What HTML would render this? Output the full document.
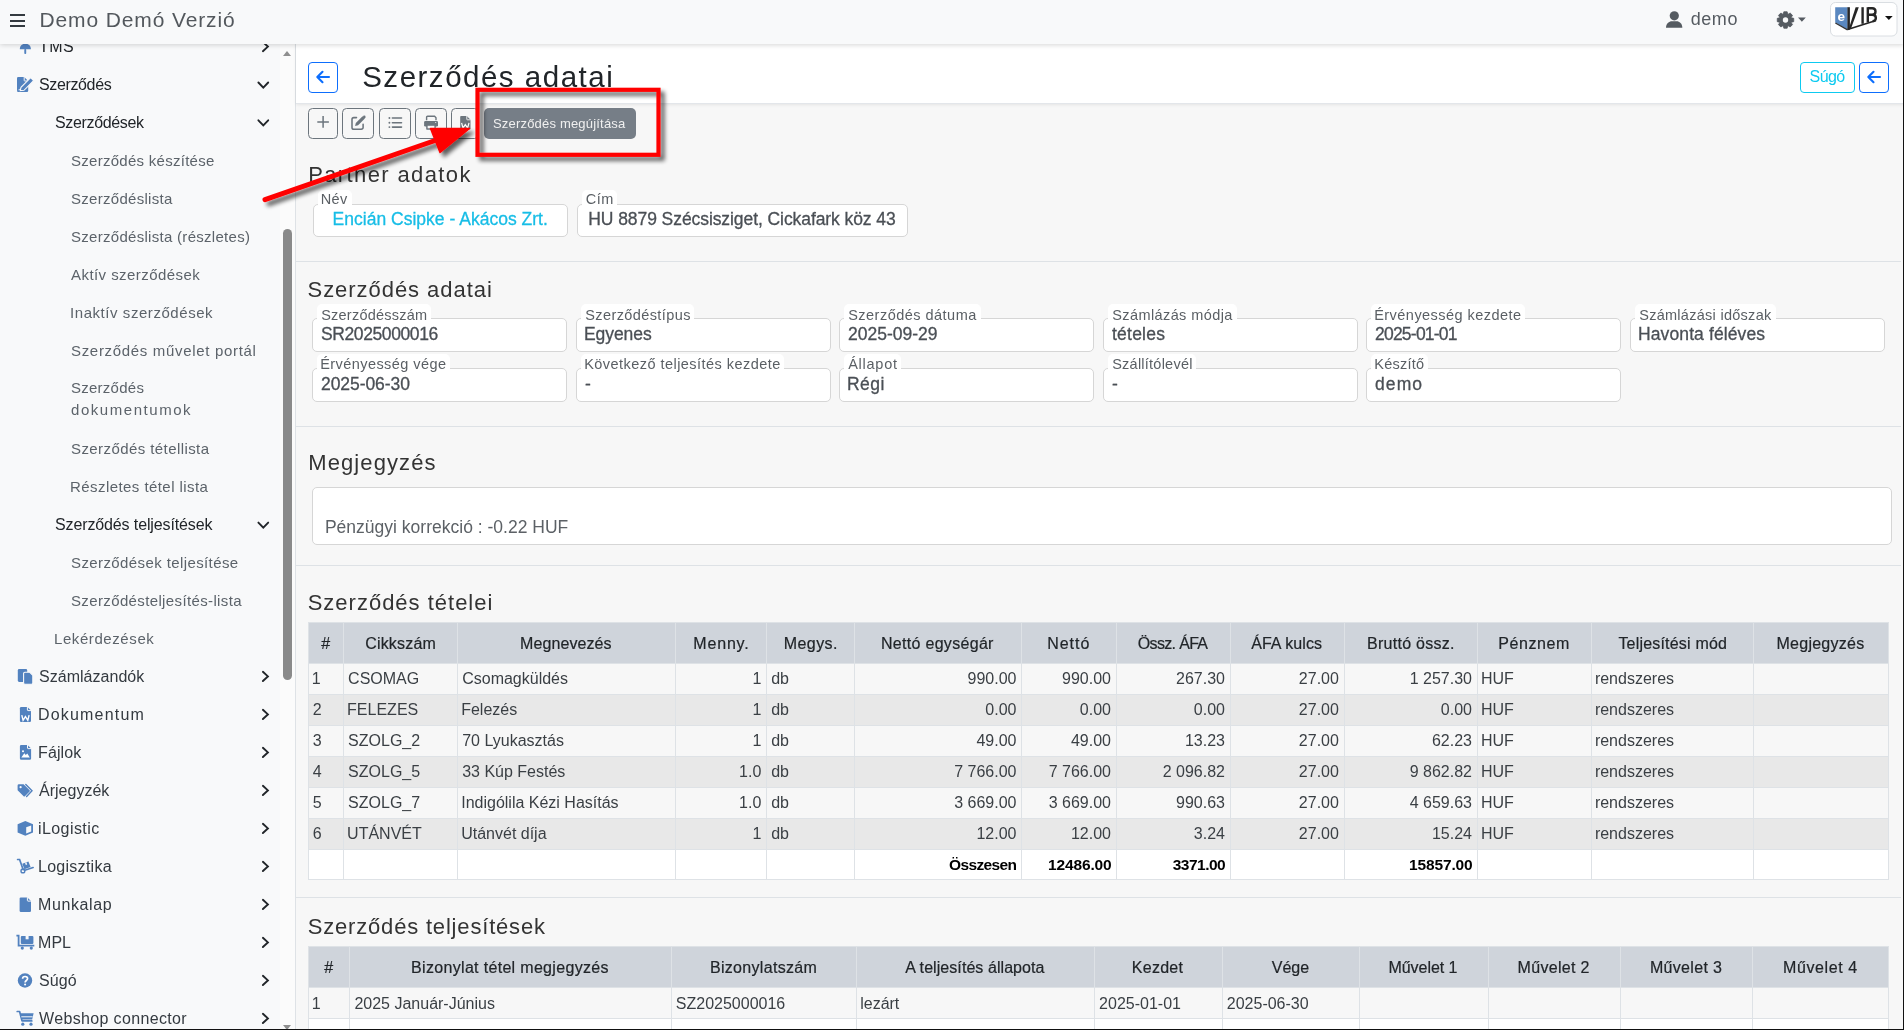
<!DOCTYPE html>
<html><head><meta charset="utf-8"><title>Szerződés adatai</title>
<style>
html,body{margin:0;padding:0;}
body{width:1904px;height:1030px;overflow:hidden;position:relative;background:#f7f7f7;font-family:"Liberation Sans", sans-serif;line-height:1;}
span{white-space:nowrap;line-height:1;}
svg{display:block}
</style></head><body>
<div style="position:absolute;left:0;top:0;width:1904px;height:44px;background:#f8f9fa;box-shadow:0 1px 5px rgba(0,0,0,.17);z-index:5"></div>
<div style="position:absolute;left:10px;top:14px;width:15px;height:2.2px;background:#343a40;z-index:6"></div>
<div style="position:absolute;left:10px;top:19.5px;width:15px;height:2.2px;background:#343a40;z-index:6"></div>
<div style="position:absolute;left:10px;top:25px;width:15px;height:2.2px;background:#343a40;z-index:6"></div>
<div style="position:absolute;left:0;top:44px;width:295px;height:986px;background:#f8f9fa;border-right:1px solid #dee2e6;z-index:1"></div>
<div style="position:absolute;left:280px;top:44px;width:15px;height:986px;background:#fbfbfb;z-index:1"></div>
<div style="position:absolute;left:283px;top:229px;width:9px;height:451px;background:#8a8a8a;border-radius:4.5px;z-index:2"></div>
<div style="position:absolute;left:296px;top:44px;width:1608px;height:58.5px;background:#fff;border-bottom:1px solid #e3e6ea;box-shadow:0 1px 3px rgba(0,0,0,.08);z-index:1"></div>
<div style="position:absolute;left:296px;top:261px;width:1605px;height:1px;background:#dee2e6"></div>
<div style="position:absolute;left:296px;top:426px;width:1605px;height:1px;background:#dee2e6"></div>
<div style="position:absolute;left:296px;top:565px;width:1605px;height:1px;background:#dee2e6"></div>
<div style="position:absolute;left:296px;top:897px;width:1605px;height:1px;background:#dee2e6"></div>
<div style="position:absolute;left:312.5px;top:203.5px;width:253px;height:31px;background:#fff;border:1px solid #d6d6d6;border-radius:5px"></div>
<div style="position:absolute;left:317.5px;top:189.5px;width:34.4px;height:16px;background:#fff;border-radius:5px 5px 0 0"></div>
<div style="position:absolute;left:576.5px;top:203.5px;width:329.5px;height:31px;background:#fff;border:1px solid #d6d6d6;border-radius:5px"></div>
<div style="position:absolute;left:581.5px;top:189.5px;width:35.6px;height:16px;background:#fff;border-radius:5px 5px 0 0"></div>
<div style="position:absolute;left:312px;top:318px;width:253px;height:31.5px;background:#fff;border:1px solid #d6d6d6;border-radius:5px"></div>
<div style="position:absolute;left:317px;top:304px;width:113.8px;height:16px;background:#fff;border-radius:5px 5px 0 0"></div>
<div style="position:absolute;left:576px;top:318px;width:253px;height:31.5px;background:#fff;border:1px solid #d6d6d6;border-radius:5px"></div>
<div style="position:absolute;left:581px;top:304px;width:113px;height:16px;background:#fff;border-radius:5px 5px 0 0"></div>
<div style="position:absolute;left:839px;top:318px;width:253px;height:31.5px;background:#fff;border:1px solid #d6d6d6;border-radius:5px"></div>
<div style="position:absolute;left:844px;top:304px;width:137px;height:16px;background:#fff;border-radius:5px 5px 0 0"></div>
<div style="position:absolute;left:1103px;top:318px;width:253px;height:31.5px;background:#fff;border:1px solid #d6d6d6;border-radius:5px"></div>
<div style="position:absolute;left:1108px;top:304px;width:129.1px;height:16px;background:#fff;border-radius:5px 5px 0 0"></div>
<div style="position:absolute;left:1366px;top:318px;width:253px;height:31.5px;background:#fff;border:1px solid #d6d6d6;border-radius:5px"></div>
<div style="position:absolute;left:1371px;top:304px;width:153.9px;height:16px;background:#fff;border-radius:5px 5px 0 0"></div>
<div style="position:absolute;left:1630px;top:318px;width:253px;height:31.5px;background:#fff;border:1px solid #d6d6d6;border-radius:5px"></div>
<div style="position:absolute;left:1635px;top:304px;width:140.8px;height:16px;background:#fff;border-radius:5px 5px 0 0"></div>
<div style="position:absolute;left:312px;top:368px;width:253px;height:31.5px;background:#fff;border:1px solid #d6d6d6;border-radius:5px"></div>
<div style="position:absolute;left:317px;top:354px;width:132.7px;height:16px;background:#fff;border-radius:5px 5px 0 0"></div>
<div style="position:absolute;left:576px;top:368px;width:253px;height:31.5px;background:#fff;border:1px solid #d6d6d6;border-radius:5px"></div>
<div style="position:absolute;left:581px;top:354px;width:203px;height:16px;background:#fff;border-radius:5px 5px 0 0"></div>
<div style="position:absolute;left:839px;top:368px;width:253px;height:31.5px;background:#fff;border:1px solid #d6d6d6;border-radius:5px"></div>
<div style="position:absolute;left:844px;top:354px;width:56.8px;height:16px;background:#fff;border-radius:5px 5px 0 0"></div>
<div style="position:absolute;left:1103px;top:368px;width:253px;height:31.5px;background:#fff;border:1px solid #d6d6d6;border-radius:5px"></div>
<div style="position:absolute;left:1108px;top:354px;width:88px;height:16px;background:#fff;border-radius:5px 5px 0 0"></div>
<div style="position:absolute;left:1366px;top:368px;width:253px;height:31.5px;background:#fff;border:1px solid #d6d6d6;border-radius:5px"></div>
<div style="position:absolute;left:1371px;top:354px;width:56.9px;height:16px;background:#fff;border-radius:5px 5px 0 0"></div>
<div style="position:absolute;left:312px;top:487px;width:1578px;height:55.5px;background:#fff;border:1px solid #d6d6d6;border-radius:5px"></div>
<div style="position:absolute;left:308px;top:622.2px;width:1580.4px;height:41.6px;background:#cfd4db"></div>
<div style="position:absolute;left:308px;top:663.8000000000001px;width:1580.4px;height:30.87px;background:#f7f7f7"></div>
<div style="position:absolute;left:308px;top:694.6700000000001px;width:1580.4px;height:30.87px;background:#e8e8e8"></div>
<div style="position:absolute;left:308px;top:725.5400000000001px;width:1580.4px;height:30.87px;background:#f7f7f7"></div>
<div style="position:absolute;left:308px;top:756.4100000000001px;width:1580.4px;height:30.87px;background:#e8e8e8"></div>
<div style="position:absolute;left:308px;top:787.2800000000001px;width:1580.4px;height:30.87px;background:#f7f7f7"></div>
<div style="position:absolute;left:308px;top:818.1500000000001px;width:1580.4px;height:30.87px;background:#e8e8e8"></div>
<div style="position:absolute;left:308px;top:849.0200000000001px;width:1580.4px;height:30.87px;background:#ffffff"></div>
<div style="position:absolute;left:308px;top:621.7px;width:1580.4px;height:1px;background:#dee2e6"></div>
<div style="position:absolute;left:308px;top:663.3000000000001px;width:1580.4px;height:1px;background:#dee2e6"></div>
<div style="position:absolute;left:308px;top:694.1700000000001px;width:1580.4px;height:1px;background:#dee2e6"></div>
<div style="position:absolute;left:308px;top:725.0400000000001px;width:1580.4px;height:1px;background:#dee2e6"></div>
<div style="position:absolute;left:308px;top:755.9100000000001px;width:1580.4px;height:1px;background:#dee2e6"></div>
<div style="position:absolute;left:308px;top:786.7800000000001px;width:1580.4px;height:1px;background:#dee2e6"></div>
<div style="position:absolute;left:308px;top:817.6500000000001px;width:1580.4px;height:1px;background:#dee2e6"></div>
<div style="position:absolute;left:308px;top:848.5200000000001px;width:1580.4px;height:1px;background:#dee2e6"></div>
<div style="position:absolute;left:308px;top:879.3900000000001px;width:1580.4px;height:1px;background:#dee2e6"></div>
<div style="position:absolute;left:307.5px;top:622.2px;width:1px;height:257.69000000000005px;background:#dee2e6"></div>
<div style="position:absolute;left:342.8px;top:622.2px;width:1px;height:257.69000000000005px;background:#dee2e6"></div>
<div style="position:absolute;left:456.9px;top:622.2px;width:1px;height:257.69000000000005px;background:#dee2e6"></div>
<div style="position:absolute;left:674.7px;top:622.2px;width:1px;height:257.69000000000005px;background:#dee2e6"></div>
<div style="position:absolute;left:765.9px;top:622.2px;width:1px;height:257.69000000000005px;background:#dee2e6"></div>
<div style="position:absolute;left:853.9px;top:622.2px;width:1px;height:257.69000000000005px;background:#dee2e6"></div>
<div style="position:absolute;left:1021.1px;top:622.2px;width:1px;height:257.69000000000005px;background:#dee2e6"></div>
<div style="position:absolute;left:1115.6px;top:622.2px;width:1px;height:257.69000000000005px;background:#dee2e6"></div>
<div style="position:absolute;left:1229.6px;top:622.2px;width:1px;height:257.69000000000005px;background:#dee2e6"></div>
<div style="position:absolute;left:1343.5px;top:622.2px;width:1px;height:257.69000000000005px;background:#dee2e6"></div>
<div style="position:absolute;left:1476.6px;top:622.2px;width:1px;height:257.69000000000005px;background:#dee2e6"></div>
<div style="position:absolute;left:1590.6px;top:622.2px;width:1px;height:257.69000000000005px;background:#dee2e6"></div>
<div style="position:absolute;left:1752.8px;top:622.2px;width:1px;height:257.69000000000005px;background:#dee2e6"></div>
<div style="position:absolute;left:1887.9px;top:622.2px;width:1px;height:257.69000000000005px;background:#dee2e6"></div>
<div style="position:absolute;left:308px;top:946.2px;width:1580.4px;height:41.2px;background:#cfd4db"></div>
<div style="position:absolute;left:308px;top:987.4000000000001px;width:1580.4px;height:30.9px;background:#f7f7f7"></div>
<div style="position:absolute;left:308px;top:1018.3000000000001px;width:1580.4px;height:30.9px;background:#ffffff"></div>
<div style="position:absolute;left:308px;top:945.7px;width:1580.4px;height:1px;background:#dee2e6"></div>
<div style="position:absolute;left:308px;top:986.9000000000001px;width:1580.4px;height:1px;background:#dee2e6"></div>
<div style="position:absolute;left:308px;top:1017.8000000000001px;width:1580.4px;height:1px;background:#dee2e6"></div>
<div style="position:absolute;left:307.5px;top:946.2px;width:1px;height:83.79999999999995px;background:#dee2e6"></div>
<div style="position:absolute;left:349.1px;top:946.2px;width:1px;height:83.79999999999995px;background:#dee2e6"></div>
<div style="position:absolute;left:670.5px;top:946.2px;width:1px;height:83.79999999999995px;background:#dee2e6"></div>
<div style="position:absolute;left:855.9px;top:946.2px;width:1px;height:83.79999999999995px;background:#dee2e6"></div>
<div style="position:absolute;left:1093.8px;top:946.2px;width:1px;height:83.79999999999995px;background:#dee2e6"></div>
<div style="position:absolute;left:1221.5px;top:946.2px;width:1px;height:83.79999999999995px;background:#dee2e6"></div>
<div style="position:absolute;left:1358.5px;top:946.2px;width:1px;height:83.79999999999995px;background:#dee2e6"></div>
<div style="position:absolute;left:1487.5px;top:946.2px;width:1px;height:83.79999999999995px;background:#dee2e6"></div>
<div style="position:absolute;left:1619.5px;top:946.2px;width:1px;height:83.79999999999995px;background:#dee2e6"></div>
<div style="position:absolute;left:1752.4px;top:946.2px;width:1px;height:83.79999999999995px;background:#dee2e6"></div>
<div style="position:absolute;left:1887.9px;top:946.2px;width:1px;height:83.79999999999995px;background:#dee2e6"></div>
<div style="position:absolute;left:308px;top:62px;width:28px;height:29px;border:1px solid #0d6efd;border-radius:4px;background:transparent;z-index:2"><svg width="28" height="28" viewBox="0 0 28 28" style="position:absolute;left:0;top:0"><path d="M8.5 14 H20 M13.5 8.8 L8.3 14 L13.5 19.2" stroke="#0d6efd" stroke-width="2.1" fill="none" stroke-linecap="round" stroke-linejoin="round"/></svg></div>
<div style="position:absolute;left:1859px;top:62px;width:28px;height:29px;border:1px solid #0d6efd;border-radius:4px;background:transparent;z-index:2"><svg width="28" height="28" viewBox="0 0 28 28" style="position:absolute;left:0;top:0"><path d="M8.5 14 H20 M13.5 8.8 L8.3 14 L13.5 19.2" stroke="#0d6efd" stroke-width="2.1" fill="none" stroke-linecap="round" stroke-linejoin="round"/></svg></div>
<div style="position:absolute;left:1800px;top:62px;width:53px;height:29px;border:1px solid #0dcaf0;border-radius:4px;background:transparent;z-index:2"></div>
<div style="position:absolute;left:308px;top:108px;width:28px;height:29px;border:1px solid #6c757d;border-radius:4.5px;background:transparent;z-index:2"></div>
<div style="position:absolute;left:342px;top:108px;width:30px;height:29px;border:1px solid #6c757d;border-radius:4.5px;background:transparent;z-index:2"></div>
<div style="position:absolute;left:379px;top:108px;width:30px;height:29px;border:1px solid #6c757d;border-radius:4.5px;background:transparent;z-index:2"></div>
<div style="position:absolute;left:415px;top:108px;width:30px;height:29px;border:1px solid #6c757d;border-radius:4.5px;background:transparent;z-index:2"></div>
<div style="position:absolute;left:451px;top:108px;width:26px;height:29px;border:1px solid #6c757d;border-radius:4.5px;background:transparent;z-index:2"></div>
<svg width="1904" height="160" viewBox="0 0 1904 160" style="position:absolute;left:0;top:0;z-index:2"><path d="M323.1 116.1 V127.8 M317.3 121.9 H328.9" stroke="#6c757d" stroke-width="1.5" fill="none"/><path d="M356.5 117.6 H353.8 a1.8 1.8 0 0 0 -1.8 1.8 V127.4 a1.8 1.8 0 0 0 1.8 1.8 H361.3 a1.8 1.8 0 0 0 1.8 -1.8 V124.2" stroke="#6c757d" stroke-width="1.55" fill="none" stroke-linecap="round"/><path d="M355.1 125.9 L355.8 123 L362.6 116.2 L364.9 118.5 L358.1 125.3Z" fill="#6c757d"/><circle cx="364.3" cy="116.9" r="1.3" fill="#6c757d"/><circle cx="389.4" cy="118" r="0.95" fill="#6c757d"/><circle cx="389.4" cy="122.7" r="0.95" fill="#6c757d"/><circle cx="389.4" cy="127.1" r="0.95" fill="#6c757d"/><path d="M392.4 118 H401.5 M392.4 122.7 H401.5 M392.4 127.1 H401.5" stroke="#6c757d" stroke-width="1.6" stroke-linecap="round"/><path d="M426.6 120.3 V117.2 a0.9 0.9 0 0 1 .9 -.9 H434.6 L436 117.7 V120.3" stroke="#6c757d" stroke-width="1.4" fill="none"/><rect x="424.1" y="120.9" width="13.9" height="5.6" rx="1.3" fill="#6c757d"/><rect x="426.2" y="124.4" width="9.6" height="5.3" rx=".6" fill="#6c757d"/><rect x="427.6" y="125.8" width="6.8" height="2.5" fill="#f7f7f7"/><circle cx="435.7" cy="122.5" r=".6" fill="#f7f7f7"/><path d="M461 116.1 H466.8 L470.5 119.8 V128.7 a0.8 0.8 0 0 1 -.8 .8 H461 a0.8 0.8 0 0 1 -.8 -.8 V116.9 a0.8 0.8 0 0 1 .8 -.8Z" fill="#6c757d"/><path d="M466.8 115.8 V119.3 a.5 .5 0 0 0 .5 .5 H470.8" stroke="#f7f7f7" stroke-width=".9" fill="none"/><path d="M461.6 122.8 L463 128 L465.3 124.6 L467.6 128 L469 122.8" stroke="#fff" stroke-width="1.2" fill="none"/></svg>
<div style="position:absolute;left:484px;top:108px;width:152px;height:30.7px;background:#767e87;border-radius:5px;z-index:3"></div>
<div style="position:absolute;left:1662px;top:8px;width:24px;height:24px;z-index:6"><svg width="24" height="24" viewBox="0 0 24 24"><circle cx="12.3" cy="7.8" r="4.6" fill="#555b61"/><path d="M4 19.5 C4 15.5 7 13.2 10 13.2 H14.5 C17.5 13.2 20.3 15.5 20.3 19.5 V19.8 H4Z" fill="#555b61"/></svg></div>
<svg width="1904" height="44" viewBox="0 0 1904 44" style="position:absolute;left:0;top:0;z-index:6"><polygon points="1791.40,17.78 1793.73,18.33 1793.73,21.67 1791.40,22.22 1791.24,22.60 1792.50,24.64 1790.14,27.00 1788.10,25.74 1787.72,25.90 1787.17,28.23 1783.83,28.23 1783.28,25.90 1782.90,25.74 1780.86,27.00 1778.50,24.64 1779.76,22.60 1779.60,22.22 1777.27,21.67 1777.27,18.33 1779.60,17.78 1779.76,17.40 1778.50,15.36 1780.86,13.00 1782.90,14.26 1783.28,14.10 1783.83,11.77 1787.17,11.77 1787.72,14.10 1788.10,14.26 1790.14,13.00 1792.50,15.36 1791.24,17.40" fill="#555b61" stroke="#555b61" stroke-width="0.8" stroke-linejoin="round"/><circle cx="1785.5" cy="20" r="2.7" fill="#f8f9fa"/><path d="M1798 17.6 H1805.8 L1801.9 21.8Z" fill="#555b61"/><rect x="1830.5" y="2.5" width="66.5" height="33.5" rx="5" fill="#fff" stroke="#dadee2" stroke-width="1"/><path d="M1835.2 7.2 H1847.6 V29.5 L1835.2 22.5Z" fill="#5a88c0"/><path d="M1835.4 23 L1847.6 29.9" stroke="#333" stroke-width="1.3"/><text x="1841.3" y="20.6" font-family="Liberation Sans" font-size="13.5" font-weight="700" fill="#fff" text-anchor="middle">e</text><rect x="1847.4" y="7.2" width="2.5" height="22.5" fill="#262626"/><path d="M1855.6 7.2 H1858.8 L1851 28.6 H1848.9Z" fill="#262626"/><rect x="1861.4" y="7.2" width="2.4" height="16.6" fill="#262626"/><rect x="1866.6" y="7.2" width="2.4" height="15.2" fill="#262626"/><path d="M1868 8.2 H1872.2 C1876.6 8.2 1876.6 14.8 1872.2 14.8 H1868 M1872.2 14.8 C1877 14.8 1877 20.8 1872.6 21.2" stroke="#262626" stroke-width="2.4" fill="none"/><path d="M1847.6 29.6 L1876 20.4" stroke="#262626" stroke-width="1.6"/><path d="M1885 15.9 H1892.7 L1888.85 19.9Z" fill="#111"/></svg>
<svg width="300" height="1030" viewBox="0 0 300 1030" style="position:absolute;left:0;top:0;z-index:2"><path d="M19.8 49.2 C19.8 42 30.9 42 30.9 49.2 Z" fill="#5282bf"/><rect x="24.3" y="49" width="1.9" height="5" rx=".8" fill="#5282bf"/><path d="M18.3 77 H24.2 L28.2 81 V90.7 a1.3 1.3 0 0 1 -1.3 1.3 H18.3 a1.3 1.3 0 0 1 -1.3 -1.3 V78.3 a1.3 1.3 0 0 1 1.3 -1.3Z" fill="#5282bf"/><path d="M24.2 76.7 V80.4 a0.6 0.6 0 0 0 .6 .6 H28.5" stroke="#f8f9fa" stroke-width="1" fill="none"/><path d="M20.2 90.6 L21 87.3 L30.6 77.7 L33.6 80.7 L24 90.3Z" fill="#5282bf" stroke="#f8f9fa" stroke-width="1.1"/><path d="M18.3 90.3 Q19.3 88.6 20 89.6" stroke="#f8f9fa" stroke-width=".8" fill="none"/><rect x="17.8" y="669" width="9.4" height="13" rx="1.4" fill="#5282bf"/><path d="M24.900000000000002 672.3 H29.799999999999997 L32.8 675.3 V683.0 a1.3 1.3 0 0 1 -1.3 1.3 H24.900000000000002 a1.3 1.3 0 0 1 -1.3 -1.3 V673.5999999999999 a1.3 1.3 0 0 1 1.3 -1.3Z" fill="#5282bf" stroke="#f8f9fa" stroke-width="1.1"/><path d="M21.2 707 H27.4 L31.0 710.6 V720.7 a1.3 1.3 0 0 1 -1.3 1.3 H21.2 a1.3 1.3 0 0 1 -1.3 -1.3 V708.3 a1.3 1.3 0 0 1 1.3 -1.3Z" fill="#5282bf"/><path d="M27.4 706.7 V710.0 a0.6 0.6 0 0 0 .6 .6 H31.3" stroke="#f8f9fa" stroke-width="1" fill="none"/><path d="M21.8 715.2 L23.1 720.3 L25.45 716.6 L27.8 720.3 L29.1 715.2" stroke="#fff" stroke-width="1.35" fill="none"/><path d="M21.2 745 H27.499999999999996 L31.099999999999998 748.6 V758.5 a1.3 1.3 0 0 1 -1.3 1.3 H21.2 a1.3 1.3 0 0 1 -1.3 -1.3 V746.3 a1.3 1.3 0 0 1 1.3 -1.3Z" fill="#5282bf"/><path d="M27.499999999999996 744.7 V748.0 a0.6 0.6 0 0 0 .6 .6 H31.4" stroke="#f8f9fa" stroke-width="1" fill="none"/><path d="M21.3 757.6 L24.3 753.3 L25.8 755 L27.3 753.6 L29.8 757.6Z" fill="#fff"/><circle cx="23" cy="751.2" r="1" fill="#fff"/><path d="M17.6 785.5 a1.3 1.3 0 0 1 1.3 -1.3 H23.6 L29.6 790.2 a.9 .9 0 0 1 0 1.3 L24.9 796.2 a.9 .9 0 0 1 -1.3 0 L17.6 790.2Z" fill="#5282bf"/><circle cx="20.6" cy="787.2" r="1.1" fill="#f8f9fa"/><path d="M25.8 784.4000000000001 L32 790.8000000000001 L26.6 796.4000000000001" stroke="#5282bf" stroke-width="1.4" fill="none" stroke-linecap="round"/><path d="M25.3 821 L33 824.2 V832.5 L25.3 835.7 L17.6 832.5 V824.2Z" fill="#5282bf"/><path d="M26.2 827.2 L31.2 825.4 V831.6 L26.2 833.6Z" fill="#f8f9fa"/><path d="M17.6 859.5 H19.6 L23.2 869.7" stroke="#5282bf" stroke-width="1.7" fill="none" stroke-linecap="round"/><circle cx="22.9" cy="870.9000000000001" r="1.9" fill="none" stroke="#5282bf" stroke-width="1.4"/><path d="M24.8 870.3000000000001 L33.1 867.5" stroke="#5282bf" stroke-width="1.7" stroke-linecap="round"/><path d="M22.3 863.7 L28.4 861.5 L30.6 867.0 L24.4 869.2Z" fill="#5282bf"/><path d="M25 862.7 L25.8 864.9000000000001 L27.2 864.4000000000001 L26.4 862.2" fill="#f8f9fa"/><path d="M20.900000000000002 897.5 H27.4 L31.0 901.1 V910.7 a1.3 1.3 0 0 1 -1.3 1.3 H20.900000000000002 a1.3 1.3 0 0 1 -1.3 -1.3 V898.8 a1.3 1.3 0 0 1 1.3 -1.3Z" fill="#5282bf"/><path d="M27.4 897.2 V900.5 a0.6 0.6 0 0 0 .6 .6 H31.3" stroke="#f8f9fa" stroke-width="1" fill="none"/><path d="M16.4 935.6999999999999 H18.6 V945.6999999999999 H34.3" stroke="#5282bf" stroke-width="1.8" fill="none"/><rect x="20.8" y="936.0" width="12.6" height="8" rx="1" fill="#5282bf"/><rect x="25.6" y="936.0" width="3" height="3.3" fill="#f8f9fa"/><circle cx="22.3" cy="948.0999999999999" r="1.6" fill="#5282bf"/><circle cx="31.3" cy="948.0999999999999" r="1.6" fill="#5282bf"/><circle cx="25" cy="980.5" r="7.2" fill="#5282bf"/><path d="M22.6 978.8000000000001 C22.6 975.8000000000001 27.6 975.8000000000001 27.6 978.6 C27.6 980.5 25.1 980.5 25.1 982.4000000000001" stroke="#fff" stroke-width="1.7" fill="none"/><circle cx="25.1" cy="984.5" r="1.05" fill="#fff"/><path d="M17.2 1011.5 H19.6 L22 1020.9 H31.8" stroke="#5282bf" stroke-width="1.7" fill="none" stroke-linecap="round" stroke-linejoin="round"/><path d="M19.9 1013.2 H33.6 L32.2 1019.4 H21.4Z" fill="#5282bf"/><path d="M21.3 1016.8000000000001 H32.6" stroke="#f8f9fa" stroke-width="1"/><circle cx="22.8" cy="1024.2" r="1.6" fill="#5282bf"/><circle cx="31" cy="1024.2" r="1.6" fill="#5282bf"/><path d="M258.4 82.5 L263.3 87.6 L268.2 82.5" stroke="#212529" stroke-width="1.9" fill="none" stroke-linecap="round"/><path d="M258.4 120.3 L263.3 125.39999999999999 L268.2 120.3" stroke="#212529" stroke-width="1.9" fill="none" stroke-linecap="round"/><path d="M258.4 522.6 L263.3 527.6999999999999 L268.2 522.6" stroke="#212529" stroke-width="1.9" fill="none" stroke-linecap="round"/><path d="M262.9 42.0 L267.9 46.6 L262.9 51.2" stroke="#212529" stroke-width="1.9" fill="none" stroke-linecap="round"/><path d="M262.9 671.8 L267.9 676.4 L262.9 681.0" stroke="#212529" stroke-width="1.9" fill="none" stroke-linecap="round"/><path d="M262.9 709.8 L267.9 714.4 L262.9 719.0" stroke="#212529" stroke-width="1.9" fill="none" stroke-linecap="round"/><path d="M262.9 747.8 L267.9 752.4 L262.9 757.0" stroke="#212529" stroke-width="1.9" fill="none" stroke-linecap="round"/><path d="M262.9 785.8 L267.9 790.4 L262.9 795.0" stroke="#212529" stroke-width="1.9" fill="none" stroke-linecap="round"/><path d="M262.9 823.8 L267.9 828.4 L262.9 833.0" stroke="#212529" stroke-width="1.9" fill="none" stroke-linecap="round"/><path d="M262.9 861.8 L267.9 866.4 L262.9 871.0" stroke="#212529" stroke-width="1.9" fill="none" stroke-linecap="round"/><path d="M262.9 899.8 L267.9 904.4 L262.9 909.0" stroke="#212529" stroke-width="1.9" fill="none" stroke-linecap="round"/><path d="M262.9 937.8 L267.9 942.4 L262.9 947.0" stroke="#212529" stroke-width="1.9" fill="none" stroke-linecap="round"/><path d="M262.9 975.8 L267.9 980.4 L262.9 985.0" stroke="#212529" stroke-width="1.9" fill="none" stroke-linecap="round"/><path d="M262.9 1013.8 L267.9 1018.4 L262.9 1023.0" stroke="#212529" stroke-width="1.9" fill="none" stroke-linecap="round"/></svg>
<div style="position:absolute;left:283px;top:51px;width:0;height:0;border-left:4.5px solid transparent;border-right:4.5px solid transparent;border-bottom:5px solid #8f8f8f;z-index:2"></div>
<div style="position:absolute;left:283px;top:1025px;width:0;height:0;border-left:4.5px solid transparent;border-right:4.5px solid transparent;border-top:5px solid #8f8f8f;z-index:2"></div>
<svg width="1904" height="1030" viewBox="0 0 1904 1030" style="position:absolute;left:0;top:0;z-index:10">
<defs><filter id="sh" x="-20%" y="-20%" width="140%" height="140%"><feGaussianBlur in="SourceAlpha" stdDeviation="2"/><feOffset dx="3.5" dy="3.5"/><feComponentTransfer><feFuncA type="linear" slope="0.62"/></feComponentTransfer><feMerge><feMergeNode/><feMergeNode in="SourceGraphic"/></feMerge></filter></defs>
<g filter="url(#sh)">
<path d="M265 199.7 L448 136" stroke="#ff0000" stroke-width="5" stroke-linecap="round"/>
<path d="M469.5 128.5 L430.5 128.5 L440 152.5Z" fill="#ff0000" stroke="#ff0000" stroke-width="1.5" stroke-linejoin="round"/>
<rect x="477.5" y="89.8" width="181" height="65" fill="none" stroke="#ff0000" stroke-width="4.2"/>
</g></svg>
<div style="position:absolute;left:1903px;top:0;width:1px;height:1030px;background:#111;z-index:20"></div>
<div style="position:absolute;left:0;top:1029px;width:1904px;height:1px;background:#111;z-index:20"></div>
<div style="position:absolute;left:0;top:0;width:1904px;height:1030px;will-change:transform;z-index:4"><span style="position:absolute;left:39.00px;top:39px;font-size:16px;color:#212529;font-weight:400;letter-spacing:0.449px;">TMS</span>
<span style="position:absolute;left:39.00px;top:77px;font-size:16px;color:#212529;font-weight:400;letter-spacing:-0.362px;">Szerződés</span>
<span style="position:absolute;left:55.00px;top:115px;font-size:16px;color:#212529;font-weight:400;letter-spacing:-0.349px;">Szerződések</span>
<span style="position:absolute;left:71.00px;top:153px;font-size:15px;color:#5c636a;font-weight:400;letter-spacing:0.275px;">Szerződés készítése</span>
<span style="position:absolute;left:71.00px;top:191px;font-size:15px;color:#5c636a;font-weight:400;letter-spacing:0.292px;">Szerződéslista</span>
<span style="position:absolute;left:71.00px;top:229px;font-size:15px;color:#5c636a;font-weight:400;letter-spacing:0.291px;">Szerződéslista (részletes)</span>
<span style="position:absolute;left:71.00px;top:267px;font-size:15px;color:#5c636a;font-weight:400;letter-spacing:0.443px;">Aktív szerződések</span>
<span style="position:absolute;left:70.00px;top:305px;font-size:15px;color:#5c636a;font-weight:400;letter-spacing:0.558px;">Inaktív szerződések</span>
<span style="position:absolute;left:71.00px;top:343px;font-size:15px;color:#5c636a;font-weight:400;letter-spacing:0.678px;">Szerződés művelet portál</span>
<span style="position:absolute;left:71.00px;top:380px;font-size:15px;color:#5c636a;font-weight:400;letter-spacing:0.254px;">Szerződés</span>
<span style="position:absolute;left:71.00px;top:402px;font-size:15px;color:#5c636a;font-weight:400;letter-spacing:1.550px;">dokumentumok</span>
<span style="position:absolute;left:71.00px;top:441px;font-size:15px;color:#5c636a;font-weight:400;letter-spacing:0.420px;">Szerződés tétellista</span>
<span style="position:absolute;left:70.00px;top:479px;font-size:15px;color:#5c636a;font-weight:400;letter-spacing:0.436px;">Részletes tétel lista</span>
<span style="position:absolute;left:55.00px;top:517px;font-size:16px;color:#212529;font-weight:400;letter-spacing:-0.123px;">Szerződés teljesítések</span>
<span style="position:absolute;left:71.00px;top:555px;font-size:15px;color:#5c636a;font-weight:400;letter-spacing:0.397px;">Szerződések teljesítése</span>
<span style="position:absolute;left:71.00px;top:593px;font-size:15px;color:#5c636a;font-weight:400;letter-spacing:0.367px;">Szerződésteljesítés-lista</span>
<span style="position:absolute;left:54.00px;top:631px;font-size:15px;color:#5c636a;font-weight:400;letter-spacing:0.583px;">Lekérdezések</span>
<span style="position:absolute;left:39.00px;top:669px;font-size:16px;color:#343a40;font-weight:400;letter-spacing:0.032px;">Számlázandók</span>
<span style="position:absolute;left:38.00px;top:707px;font-size:16px;color:#343a40;font-weight:400;letter-spacing:1.187px;">Dokumentum</span>
<span style="position:absolute;left:38.00px;top:745px;font-size:16px;color:#343a40;font-weight:400;letter-spacing:0.104px;">Fájlok</span>
<span style="position:absolute;left:39.00px;top:783px;font-size:16px;color:#343a40;font-weight:400;letter-spacing:0.006px;">Árjegyzék</span>
<span style="position:absolute;left:38.00px;top:821px;font-size:16px;color:#343a40;font-weight:400;letter-spacing:0.424px;">iLogistic</span>
<span style="position:absolute;left:38.00px;top:859px;font-size:16px;color:#343a40;font-weight:400;letter-spacing:0.272px;">Logisztika</span>
<span style="position:absolute;left:38.00px;top:897px;font-size:16px;color:#343a40;font-weight:400;letter-spacing:0.603px;">Munkalap</span>
<span style="position:absolute;left:38.00px;top:935px;font-size:16px;color:#343a40;font-weight:400;letter-spacing:0.050px;">MPL</span>
<span style="position:absolute;left:39.00px;top:973px;font-size:16px;color:#343a40;font-weight:400;letter-spacing:0.077px;">Súgó</span>
<span style="position:absolute;left:39.00px;top:1011px;font-size:16px;color:#343a40;font-weight:400;letter-spacing:0.351px;">Webshop connector</span>
<span style="position:absolute;left:362.20px;top:62px;font-size:29.5px;color:#212529;font-weight:400;letter-spacing:1.507px;">Szerződés adatai</span>
<span style="position:absolute;left:1809.60px;top:69px;font-size:16px;color:#0dcaf0;font-weight:400;letter-spacing:-0.590px;">Súgó</span>
<span style="position:absolute;left:493.00px;top:117px;font-size:13px;color:#f0f0f0;font-weight:400;letter-spacing:0.190px;">Szerződés megújítása</span>
<span style="position:absolute;left:308.20px;top:164px;font-size:22px;color:#333;font-weight:400;letter-spacing:1.376px;">Partner adatok</span>
<span style="position:absolute;left:307.50px;top:279px;font-size:22px;color:#333;font-weight:400;letter-spacing:0.953px;">Szerződés adatai</span>
<span style="position:absolute;left:308.30px;top:452px;font-size:22px;color:#333;font-weight:400;letter-spacing:1.090px;">Megjegyzés</span>
<span style="position:absolute;left:307.70px;top:592px;font-size:22px;color:#333;font-weight:400;letter-spacing:0.995px;">Szerződés tételei</span>
<span style="position:absolute;left:307.70px;top:916px;font-size:22px;color:#333;font-weight:400;letter-spacing:0.819px;">Szerződés teljesítések</span>
<span style="position:absolute;left:320.70px;top:192px;font-size:14.5px;color:#5a5f64;font-weight:400;letter-spacing:0.432px;">Név</span>
<span style="position:absolute;left:332.60px;top:211px;font-size:17.5px;color:#17bde6;font-weight:400;letter-spacing:0.010px;-webkit-text-stroke:0.3px #17bde6;">Encián Csipke - Akácos Zrt.</span>
<span style="position:absolute;left:585.70px;top:192px;font-size:14.5px;color:#5a5f64;font-weight:400;letter-spacing:0.550px;">Cím</span>
<span style="position:absolute;left:588.30px;top:211px;font-size:17.5px;color:#4a4f55;font-weight:400;letter-spacing:-0.077px;-webkit-text-stroke:0.3px #4a4f55;">HU 8879 Szécsisziget, Cickafark köz 43</span>
<span style="position:absolute;left:321.20px;top:308px;font-size:14.5px;color:#5a5f64;font-weight:400;letter-spacing:0.227px;">Szerződésszám</span>
<span style="position:absolute;left:321.00px;top:326px;font-size:17.5px;color:#4a4f55;font-weight:400;letter-spacing:-0.400px;-webkit-text-stroke:0.3px #4a4f55;">SR2025000016</span>
<span style="position:absolute;left:585.20px;top:308px;font-size:14.5px;color:#5a5f64;font-weight:400;letter-spacing:0.408px;">Szerződéstípus</span>
<span style="position:absolute;left:584.00px;top:326px;font-size:17.5px;color:#4a4f55;font-weight:400;letter-spacing:-0.076px;-webkit-text-stroke:0.3px #4a4f55;">Egyenes</span>
<span style="position:absolute;left:848.20px;top:308px;font-size:14.5px;color:#5a5f64;font-weight:400;letter-spacing:0.478px;">Szerződés dátuma</span>
<span style="position:absolute;left:848.00px;top:326px;font-size:17.5px;color:#4a4f55;font-weight:400;letter-spacing:0.002px;-webkit-text-stroke:0.3px #4a4f55;">2025-09-29</span>
<span style="position:absolute;left:1112.20px;top:308px;font-size:14.5px;color:#5a5f64;font-weight:400;letter-spacing:0.409px;">Számlázás módja</span>
<span style="position:absolute;left:1112.00px;top:326px;font-size:17.5px;color:#4a4f55;font-weight:400;letter-spacing:0.232px;-webkit-text-stroke:0.3px #4a4f55;">tételes</span>
<span style="position:absolute;left:1374.20px;top:308px;font-size:14.5px;color:#5a5f64;font-weight:400;letter-spacing:0.463px;">Érvényesség kezdete</span>
<span style="position:absolute;left:1375.00px;top:326px;font-size:17.5px;color:#4a4f55;font-weight:400;letter-spacing:-0.776px;-webkit-text-stroke:0.3px #4a4f55;">2025-01-01</span>
<span style="position:absolute;left:1639.20px;top:308px;font-size:14.5px;color:#5a5f64;font-weight:400;letter-spacing:0.278px;">Számlázási időszak</span>
<span style="position:absolute;left:1638.00px;top:326px;font-size:17.5px;color:#4a4f55;font-weight:400;letter-spacing:0.111px;-webkit-text-stroke:0.3px #4a4f55;">Havonta féléves</span>
<span style="position:absolute;left:320.20px;top:357px;font-size:14.5px;color:#5a5f64;font-weight:400;letter-spacing:0.431px;">Érvényesség vége</span>
<span style="position:absolute;left:321.00px;top:376px;font-size:17.5px;color:#4a4f55;font-weight:400;letter-spacing:-0.065px;-webkit-text-stroke:0.3px #4a4f55;">2025-06-30</span>
<span style="position:absolute;left:584.20px;top:357px;font-size:14.5px;color:#5a5f64;font-weight:400;letter-spacing:0.455px;">Következő teljesítés kezdete</span>
<span style="position:absolute;left:585.00px;top:376px;font-size:17.5px;color:#4a4f55;font-weight:400;letter-spacing:0.000px;-webkit-text-stroke:0.3px #4a4f55;">-</span>
<span style="position:absolute;left:848.20px;top:357px;font-size:14.5px;color:#5a5f64;font-weight:400;letter-spacing:0.749px;">Állapot</span>
<span style="position:absolute;left:847.00px;top:376px;font-size:17.5px;color:#4a4f55;font-weight:400;letter-spacing:0.432px;-webkit-text-stroke:0.3px #4a4f55;">Régi</span>
<span style="position:absolute;left:1112.20px;top:357px;font-size:14.5px;color:#5a5f64;font-weight:400;letter-spacing:0.238px;">Szállítólevél</span>
<span style="position:absolute;left:1112.00px;top:376px;font-size:17.5px;color:#4a4f55;font-weight:400;letter-spacing:0.000px;-webkit-text-stroke:0.3px #4a4f55;">-</span>
<span style="position:absolute;left:1374.20px;top:357px;font-size:14.5px;color:#5a5f64;font-weight:400;letter-spacing:0.268px;">Készítő</span>
<span style="position:absolute;left:1375.00px;top:376px;font-size:17.5px;color:#4a4f55;font-weight:400;letter-spacing:1.086px;-webkit-text-stroke:0.3px #4a4f55;">demo</span>
<span style="position:absolute;left:324.90px;top:519px;font-size:17.5px;color:#5c6166;font-weight:400;letter-spacing:0.008px;">Pénzügyi korrekció : -0.22 HUF</span>
<span style="position:absolute;left:321.15px;top:636px;font-size:16px;color:#212529;font-weight:400;letter-spacing:0.000px;-webkit-text-stroke:0.2px #212529;">#</span>
<span style="position:absolute;left:365.20px;top:636px;font-size:16px;color:#212529;font-weight:400;letter-spacing:0.185px;-webkit-text-stroke:0.2px #212529;">Cikkszám</span>
<span style="position:absolute;left:520.10px;top:636px;font-size:16px;color:#212529;font-weight:400;letter-spacing:0.076px;-webkit-text-stroke:0.2px #212529;">Megnevezés</span>
<span style="position:absolute;left:693.35px;top:636px;font-size:16px;color:#212529;font-weight:400;letter-spacing:0.813px;-webkit-text-stroke:0.2px #212529;">Menny.</span>
<span style="position:absolute;left:783.80px;top:636px;font-size:16px;color:#212529;font-weight:400;letter-spacing:0.415px;-webkit-text-stroke:0.2px #212529;">Megys.</span>
<span style="position:absolute;left:880.90px;top:636px;font-size:16px;color:#212529;font-weight:400;letter-spacing:0.309px;-webkit-text-stroke:0.2px #212529;">Nettó egységár</span>
<span style="position:absolute;left:1047.20px;top:636px;font-size:16px;color:#212529;font-weight:400;letter-spacing:0.989px;-webkit-text-stroke:0.2px #212529;">Nettó</span>
<span style="position:absolute;left:1137.85px;top:636px;font-size:16px;color:#212529;font-weight:400;letter-spacing:-0.675px;-webkit-text-stroke:0.2px #212529;">Össz. ÁFA</span>
<span style="position:absolute;left:1251.15px;top:636px;font-size:16px;color:#212529;font-weight:400;letter-spacing:0.083px;-webkit-text-stroke:0.2px #212529;">ÁFA kulcs</span>
<span style="position:absolute;left:1367.10px;top:636px;font-size:16px;color:#212529;font-weight:400;letter-spacing:0.261px;-webkit-text-stroke:0.2px #212529;">Bruttó össz.</span>
<span style="position:absolute;left:1498.20px;top:636px;font-size:16px;color:#212529;font-weight:400;letter-spacing:0.589px;-webkit-text-stroke:0.2px #212529;">Pénznem</span>
<span style="position:absolute;left:1618.40px;top:636px;font-size:16px;color:#212529;font-weight:400;letter-spacing:0.191px;-webkit-text-stroke:0.2px #212529;">Teljesítési mód</span>
<span style="position:absolute;left:1776.55px;top:636px;font-size:16px;color:#212529;font-weight:400;letter-spacing:0.247px;-webkit-text-stroke:0.2px #212529;">Megjegyzés</span>
<span style="position:absolute;left:311.80px;top:671px;font-size:16px;color:#3a3f44;font-weight:400;letter-spacing:0.000px;">1</span>
<span style="position:absolute;left:348.10px;top:671px;font-size:16px;color:#3a3f44;font-weight:400;letter-spacing:0.000px;">CSOMAG</span>
<span style="position:absolute;left:462.20px;top:671px;font-size:16px;color:#3a3f44;font-weight:400;letter-spacing:0.000px;">Csomagküldés</span>
<span style="position:absolute;left:752.40px;top:671px;font-size:16px;color:#3a3f44;font-weight:400;letter-spacing:0.000px;">1</span>
<span style="position:absolute;left:771.20px;top:671px;font-size:16px;color:#3a3f44;font-weight:400;letter-spacing:0.000px;">db</span>
<span style="position:absolute;left:967.56px;top:671px;font-size:16px;color:#3a3f44;font-weight:400;letter-spacing:0.000px;">990.00</span>
<span style="position:absolute;left:1062.06px;top:671px;font-size:16px;color:#3a3f44;font-weight:400;letter-spacing:0.000px;">990.00</span>
<span style="position:absolute;left:1176.06px;top:671px;font-size:16px;color:#3a3f44;font-weight:400;letter-spacing:0.000px;">267.30</span>
<span style="position:absolute;left:1298.86px;top:671px;font-size:16px;color:#3a3f44;font-weight:400;letter-spacing:0.000px;">27.00</span>
<span style="position:absolute;left:1409.72px;top:671px;font-size:16px;color:#3a3f44;font-weight:400;letter-spacing:0.000px;">1 257.30</span>
<span style="position:absolute;left:1480.90px;top:671px;font-size:16px;color:#3a3f44;font-weight:400;letter-spacing:0.000px;">HUF</span>
<span style="position:absolute;left:1594.90px;top:671px;font-size:16px;color:#3a3f44;font-weight:400;letter-spacing:0.000px;">rendszeres</span>
<span style="position:absolute;left:312.80px;top:702px;font-size:16px;color:#3a3f44;font-weight:400;letter-spacing:0.000px;">2</span>
<span style="position:absolute;left:347.10px;top:702px;font-size:16px;color:#3a3f44;font-weight:400;letter-spacing:0.000px;">FELEZES</span>
<span style="position:absolute;left:461.20px;top:702px;font-size:16px;color:#3a3f44;font-weight:400;letter-spacing:0.000px;">Felezés</span>
<span style="position:absolute;left:752.40px;top:702px;font-size:16px;color:#3a3f44;font-weight:400;letter-spacing:0.000px;">1</span>
<span style="position:absolute;left:771.20px;top:702px;font-size:16px;color:#3a3f44;font-weight:400;letter-spacing:0.000px;">db</span>
<span style="position:absolute;left:985.36px;top:702px;font-size:16px;color:#3a3f44;font-weight:400;letter-spacing:0.000px;">0.00</span>
<span style="position:absolute;left:1079.86px;top:702px;font-size:16px;color:#3a3f44;font-weight:400;letter-spacing:0.000px;">0.00</span>
<span style="position:absolute;left:1193.86px;top:702px;font-size:16px;color:#3a3f44;font-weight:400;letter-spacing:0.000px;">0.00</span>
<span style="position:absolute;left:1298.86px;top:702px;font-size:16px;color:#3a3f44;font-weight:400;letter-spacing:0.000px;">27.00</span>
<span style="position:absolute;left:1440.86px;top:702px;font-size:16px;color:#3a3f44;font-weight:400;letter-spacing:0.000px;">0.00</span>
<span style="position:absolute;left:1480.90px;top:702px;font-size:16px;color:#3a3f44;font-weight:400;letter-spacing:0.000px;">HUF</span>
<span style="position:absolute;left:1594.90px;top:702px;font-size:16px;color:#3a3f44;font-weight:400;letter-spacing:0.000px;">rendszeres</span>
<span style="position:absolute;left:312.80px;top:733px;font-size:16px;color:#3a3f44;font-weight:400;letter-spacing:0.000px;">3</span>
<span style="position:absolute;left:348.10px;top:733px;font-size:16px;color:#3a3f44;font-weight:400;letter-spacing:0.000px;">SZOLG_2</span>
<span style="position:absolute;left:462.20px;top:733px;font-size:16px;color:#3a3f44;font-weight:400;letter-spacing:0.000px;">70 Lyukasztás</span>
<span style="position:absolute;left:752.40px;top:733px;font-size:16px;color:#3a3f44;font-weight:400;letter-spacing:0.000px;">1</span>
<span style="position:absolute;left:771.20px;top:733px;font-size:16px;color:#3a3f44;font-weight:400;letter-spacing:0.000px;">db</span>
<span style="position:absolute;left:976.46px;top:733px;font-size:16px;color:#3a3f44;font-weight:400;letter-spacing:0.000px;">49.00</span>
<span style="position:absolute;left:1070.96px;top:733px;font-size:16px;color:#3a3f44;font-weight:400;letter-spacing:0.000px;">49.00</span>
<span style="position:absolute;left:1184.96px;top:733px;font-size:16px;color:#3a3f44;font-weight:400;letter-spacing:0.000px;">13.23</span>
<span style="position:absolute;left:1298.86px;top:733px;font-size:16px;color:#3a3f44;font-weight:400;letter-spacing:0.000px;">27.00</span>
<span style="position:absolute;left:1431.96px;top:733px;font-size:16px;color:#3a3f44;font-weight:400;letter-spacing:0.000px;">62.23</span>
<span style="position:absolute;left:1480.90px;top:733px;font-size:16px;color:#3a3f44;font-weight:400;letter-spacing:0.000px;">HUF</span>
<span style="position:absolute;left:1594.90px;top:733px;font-size:16px;color:#3a3f44;font-weight:400;letter-spacing:0.000px;">rendszeres</span>
<span style="position:absolute;left:312.80px;top:764px;font-size:16px;color:#3a3f44;font-weight:400;letter-spacing:0.000px;">4</span>
<span style="position:absolute;left:348.10px;top:764px;font-size:16px;color:#3a3f44;font-weight:400;letter-spacing:0.000px;">SZOLG_5</span>
<span style="position:absolute;left:462.20px;top:764px;font-size:16px;color:#3a3f44;font-weight:400;letter-spacing:0.000px;">33 Kúp Festés</span>
<span style="position:absolute;left:739.06px;top:764px;font-size:16px;color:#3a3f44;font-weight:400;letter-spacing:0.000px;">1.0</span>
<span style="position:absolute;left:771.20px;top:764px;font-size:16px;color:#3a3f44;font-weight:400;letter-spacing:0.000px;">db</span>
<span style="position:absolute;left:954.22px;top:764px;font-size:16px;color:#3a3f44;font-weight:400;letter-spacing:0.000px;">7 766.00</span>
<span style="position:absolute;left:1048.72px;top:764px;font-size:16px;color:#3a3f44;font-weight:400;letter-spacing:0.000px;">7 766.00</span>
<span style="position:absolute;left:1162.72px;top:764px;font-size:16px;color:#3a3f44;font-weight:400;letter-spacing:0.000px;">2 096.82</span>
<span style="position:absolute;left:1298.86px;top:764px;font-size:16px;color:#3a3f44;font-weight:400;letter-spacing:0.000px;">27.00</span>
<span style="position:absolute;left:1409.72px;top:764px;font-size:16px;color:#3a3f44;font-weight:400;letter-spacing:0.000px;">9 862.82</span>
<span style="position:absolute;left:1480.90px;top:764px;font-size:16px;color:#3a3f44;font-weight:400;letter-spacing:0.000px;">HUF</span>
<span style="position:absolute;left:1594.90px;top:764px;font-size:16px;color:#3a3f44;font-weight:400;letter-spacing:0.000px;">rendszeres</span>
<span style="position:absolute;left:312.80px;top:795px;font-size:16px;color:#3a3f44;font-weight:400;letter-spacing:0.000px;">5</span>
<span style="position:absolute;left:348.10px;top:795px;font-size:16px;color:#3a3f44;font-weight:400;letter-spacing:0.000px;">SZOLG_7</span>
<span style="position:absolute;left:461.20px;top:795px;font-size:16px;color:#3a3f44;font-weight:400;letter-spacing:0.000px;">Indigólila Kézi Hasítás</span>
<span style="position:absolute;left:739.06px;top:795px;font-size:16px;color:#3a3f44;font-weight:400;letter-spacing:0.000px;">1.0</span>
<span style="position:absolute;left:771.20px;top:795px;font-size:16px;color:#3a3f44;font-weight:400;letter-spacing:0.000px;">db</span>
<span style="position:absolute;left:954.22px;top:795px;font-size:16px;color:#3a3f44;font-weight:400;letter-spacing:0.000px;">3 669.00</span>
<span style="position:absolute;left:1048.72px;top:795px;font-size:16px;color:#3a3f44;font-weight:400;letter-spacing:0.000px;">3 669.00</span>
<span style="position:absolute;left:1176.06px;top:795px;font-size:16px;color:#3a3f44;font-weight:400;letter-spacing:0.000px;">990.63</span>
<span style="position:absolute;left:1298.86px;top:795px;font-size:16px;color:#3a3f44;font-weight:400;letter-spacing:0.000px;">27.00</span>
<span style="position:absolute;left:1409.72px;top:795px;font-size:16px;color:#3a3f44;font-weight:400;letter-spacing:0.000px;">4 659.63</span>
<span style="position:absolute;left:1480.90px;top:795px;font-size:16px;color:#3a3f44;font-weight:400;letter-spacing:0.000px;">HUF</span>
<span style="position:absolute;left:1594.90px;top:795px;font-size:16px;color:#3a3f44;font-weight:400;letter-spacing:0.000px;">rendszeres</span>
<span style="position:absolute;left:312.80px;top:826px;font-size:16px;color:#3a3f44;font-weight:400;letter-spacing:0.000px;">6</span>
<span style="position:absolute;left:347.10px;top:826px;font-size:16px;color:#3a3f44;font-weight:400;letter-spacing:0.000px;">UTÁNVÉT</span>
<span style="position:absolute;left:461.20px;top:826px;font-size:16px;color:#3a3f44;font-weight:400;letter-spacing:0.000px;">Utánvét díja</span>
<span style="position:absolute;left:752.40px;top:826px;font-size:16px;color:#3a3f44;font-weight:400;letter-spacing:0.000px;">1</span>
<span style="position:absolute;left:771.20px;top:826px;font-size:16px;color:#3a3f44;font-weight:400;letter-spacing:0.000px;">db</span>
<span style="position:absolute;left:976.46px;top:826px;font-size:16px;color:#3a3f44;font-weight:400;letter-spacing:0.000px;">12.00</span>
<span style="position:absolute;left:1070.96px;top:826px;font-size:16px;color:#3a3f44;font-weight:400;letter-spacing:0.000px;">12.00</span>
<span style="position:absolute;left:1193.86px;top:826px;font-size:16px;color:#3a3f44;font-weight:400;letter-spacing:0.000px;">3.24</span>
<span style="position:absolute;left:1298.86px;top:826px;font-size:16px;color:#3a3f44;font-weight:400;letter-spacing:0.000px;">27.00</span>
<span style="position:absolute;left:1431.96px;top:826px;font-size:16px;color:#3a3f44;font-weight:400;letter-spacing:0.000px;">15.24</span>
<span style="position:absolute;left:1480.90px;top:826px;font-size:16px;color:#3a3f44;font-weight:400;letter-spacing:0.000px;">HUF</span>
<span style="position:absolute;left:1594.90px;top:826px;font-size:16px;color:#3a3f44;font-weight:400;letter-spacing:0.000px;">rendszeres</span>
<span style="position:absolute;left:949.00px;top:857px;font-size:15.5px;color:#000;font-weight:700;letter-spacing:-0.615px;">Összesen</span>
<span style="position:absolute;left:1048.10px;top:857px;font-size:15.5px;color:#000;font-weight:700;letter-spacing:-0.147px;">12486.00</span>
<span style="position:absolute;left:1172.70px;top:857px;font-size:15.5px;color:#000;font-weight:700;letter-spacing:-0.501px;">3371.00</span>
<span style="position:absolute;left:1409.10px;top:857px;font-size:15.5px;color:#000;font-weight:700;letter-spacing:-0.147px;">15857.00</span>
<span style="position:absolute;left:324.30px;top:960px;font-size:16px;color:#212529;font-weight:400;letter-spacing:0.000px;-webkit-text-stroke:0.2px #212529;">#</span>
<span style="position:absolute;left:411.10px;top:960px;font-size:16px;color:#212529;font-weight:400;letter-spacing:0.319px;-webkit-text-stroke:0.2px #212529;">Bizonylat tétel megjegyzés</span>
<span style="position:absolute;left:709.90px;top:960px;font-size:16px;color:#212529;font-weight:400;letter-spacing:0.315px;-webkit-text-stroke:0.2px #212529;">Bizonylatszám</span>
<span style="position:absolute;left:905.25px;top:960px;font-size:16px;color:#212529;font-weight:400;letter-spacing:0.067px;-webkit-text-stroke:0.2px #212529;">A teljesítés állapota</span>
<span style="position:absolute;left:1131.80px;top:960px;font-size:16px;color:#212529;font-weight:400;letter-spacing:0.267px;-webkit-text-stroke:0.2px #212529;">Kezdet</span>
<span style="position:absolute;left:1271.70px;top:960px;font-size:16px;color:#212529;font-weight:400;letter-spacing:0.044px;-webkit-text-stroke:0.2px #212529;">Vége</span>
<span style="position:absolute;left:1388.50px;top:960px;font-size:16px;color:#212529;font-weight:400;letter-spacing:-0.059px;-webkit-text-stroke:0.2px #212529;">Művelet 1</span>
<span style="position:absolute;left:1517.55px;top:960px;font-size:16px;color:#212529;font-weight:400;letter-spacing:0.304px;-webkit-text-stroke:0.2px #212529;">Művelet 2</span>
<span style="position:absolute;left:1649.95px;top:960px;font-size:16px;color:#212529;font-weight:400;letter-spacing:0.316px;-webkit-text-stroke:0.2px #212529;">Művelet 3</span>
<span style="position:absolute;left:1783.10px;top:960px;font-size:16px;color:#212529;font-weight:400;letter-spacing:0.579px;-webkit-text-stroke:0.2px #212529;">Művelet 4</span>
<span style="position:absolute;left:311.80px;top:996px;font-size:16px;color:#3a3f44;font-weight:400;letter-spacing:0.000px;">1</span>
<span style="position:absolute;left:354.40px;top:996px;font-size:16px;color:#3a3f44;font-weight:400;letter-spacing:0.000px;">2025 Január-Június</span>
<span style="position:absolute;left:675.80px;top:996px;font-size:16px;color:#3a3f44;font-weight:400;letter-spacing:0.000px;">SZ2025000016</span>
<span style="position:absolute;left:860.20px;top:996px;font-size:16px;color:#3a3f44;font-weight:400;letter-spacing:0.000px;">lezárt</span>
<span style="position:absolute;left:1099.10px;top:996px;font-size:16px;color:#3a3f44;font-weight:400;letter-spacing:0.000px;">2025-01-01</span>
<span style="position:absolute;left:1226.80px;top:996px;font-size:16px;color:#3a3f44;font-weight:400;letter-spacing:0.000px;">2025-06-30</span></div>
<div style="position:absolute;left:0;top:0;width:1904px;height:1030px;will-change:transform;z-index:7"><span style="position:absolute;left:39.50px;top:9px;font-size:21px;color:#53585d;font-weight:400;letter-spacing:0.874px;">Demo Demó Verzió</span>
<span style="position:absolute;left:1690.70px;top:10px;font-size:18px;color:#555b61;font-weight:400;letter-spacing:0.561px;">demo</span></div>
</body></html>
